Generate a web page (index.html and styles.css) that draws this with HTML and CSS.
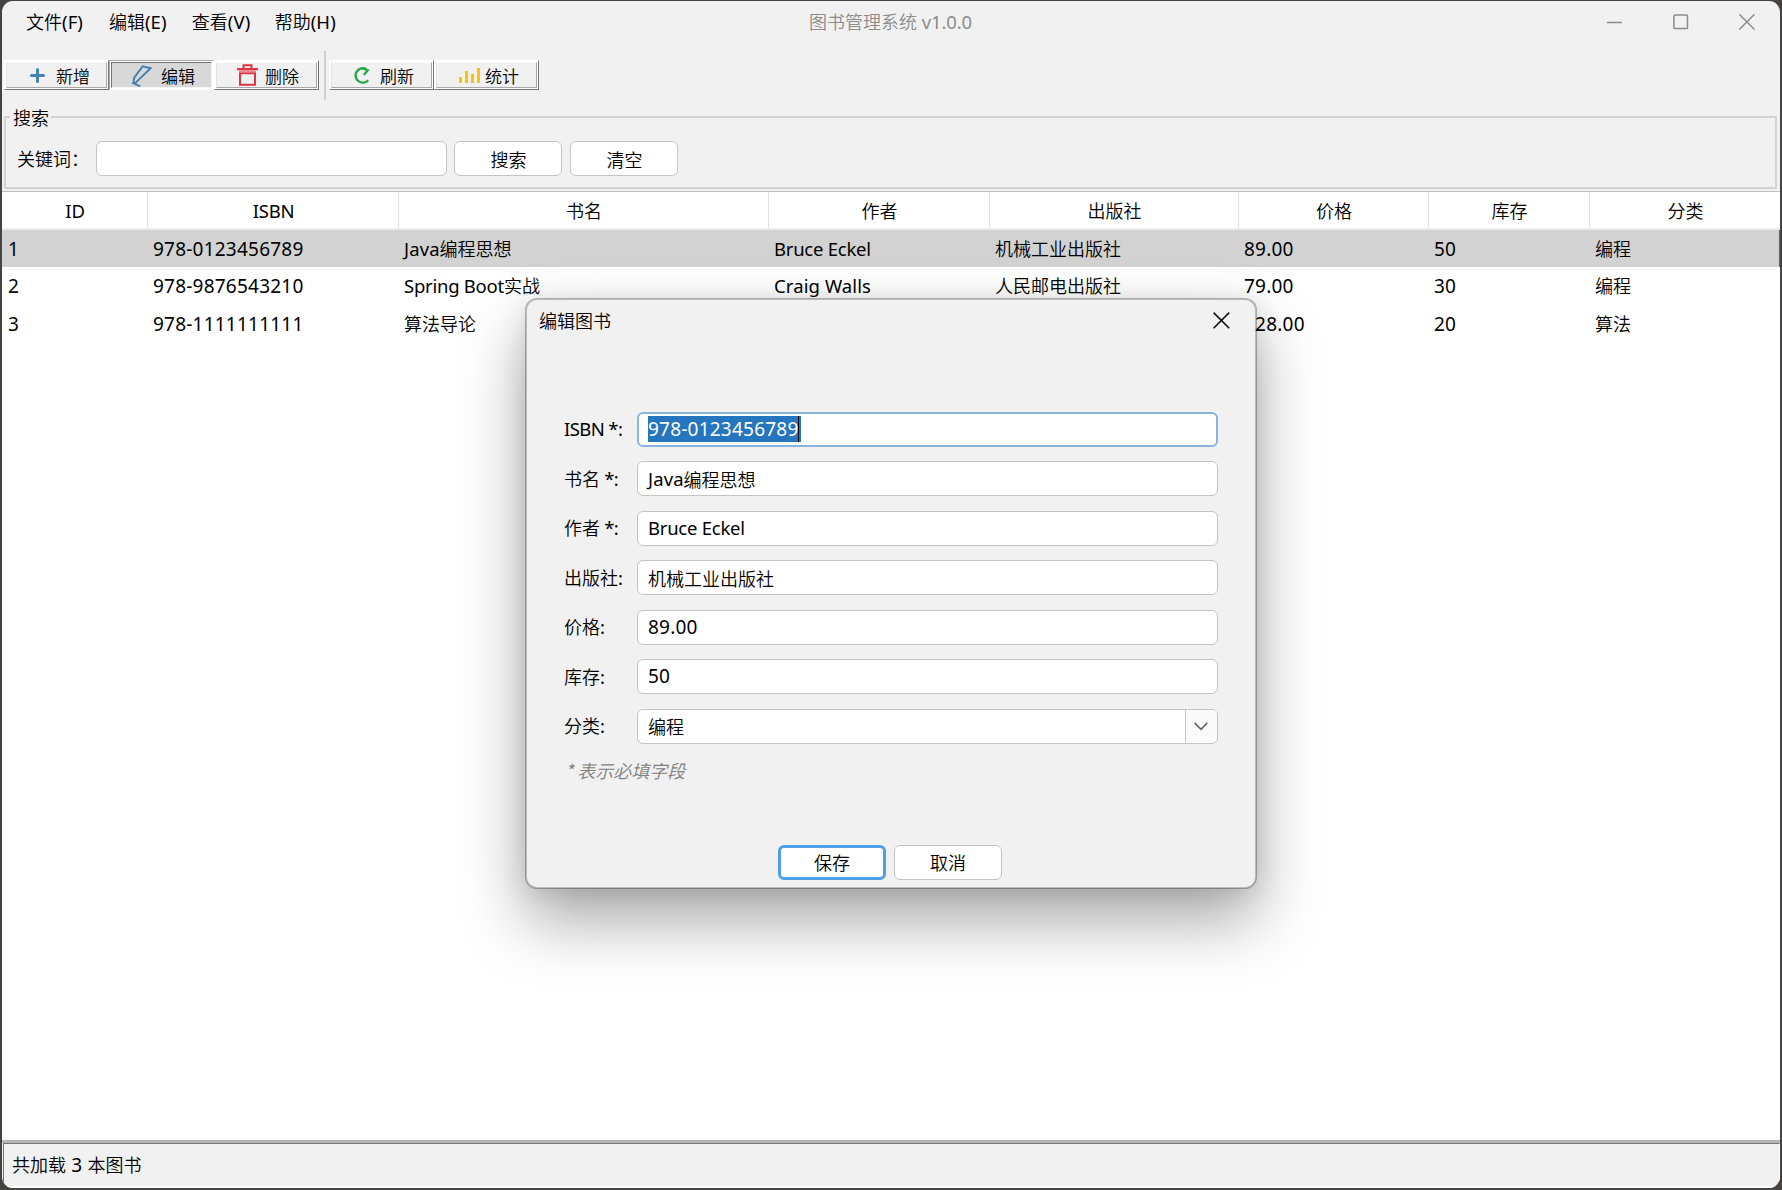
FILE: index.html
```html
<!DOCTYPE html>
<html lang="zh-CN">
<head>
<meta charset="utf-8">
<title>图书管理系统 v1.0.0</title>
<link rel="stylesheet" href="styles.css">
</head>
<body>
<div class="window">
  <header class="titlebar">
    <nav class="menu">
      <span>文件<i class="lat">(F)</i></span>
      <span>编辑<i class="lat">(E)</i></span>
      <span>查看<i class="lat">(V)</i></span>
      <span>帮助<i class="lat">(H)</i></span>
    </nav>
    <h1 class="title">图书管理系统<i class="lat"> v1.0.0</i></h1>
    <div class="controls">
      <svg width="16" height="16" viewBox="0 0 16 16"><path d="M0 8.5H15"/></svg>
      <svg width="16" height="16" viewBox="0 0 16 16"><rect x=".9" y="1" width="13.6" height="13.6" rx="1.2"/></svg>
      <svg width="16" height="16" viewBox="0 0 16 16"><path d="M.3.3 15.5 15.5M15.5.3.3 15.5"/></svg>
    </div>
  </header>

  <div class="toolbar">
    <button class="tool"><span class="face"><svg class="plus" width="15" height="15" viewBox="0 0 15 15"><path d="M7.5 1.5v12M1.5 7.5h12" stroke="#4682b4" stroke-width="3" stroke-linecap="round"/></svg>新增</span></button>
    <button class="tool pressed"><span class="face"><svg class="pen" width="20" height="22" viewBox="0 0 20 22" fill="none" stroke="#4682b4" stroke-width="2"><path d="M1.4 18.2 2.2 12.6 10.6 1.3 18.6 3.2 3.6 17.6 1.4 18.2 8.3 21.3"/></svg>编辑</span></button>
    <button class="tool"><span class="face"><svg class="trash" width="21" height="22" viewBox="0 0 21 22" fill="none" stroke="#dc3545" stroke-width="2"><path d="M3 9.2h15v11.6H3zM6.5 4V1.2h8V4"/><path d="M0 5.2h21" stroke-width="2.2"/><path d="M2 7.2h17" stroke="#e9868f" stroke-width="2"/></svg>删除</span></button>
    <span class="divider"></span>
    <button class="tool"><span class="face"><svg class="reload" width="17" height="18" viewBox="0 0 17 18" fill="none" stroke="#28a745" stroke-width="2.4"><path d="M15.2 14.2A7.2 7.2 0 1 1 13.4 3.2"/><path d="M8.8 2.2 14.8 4.2 10.8 9" stroke-width="2.2"/></svg>刷新</span></button>
    <button class="tool"><span class="face"><svg class="bars" width="21" height="15" viewBox="0 0 21 15" fill="#ffc107"><path d="M0 9h3v6H0zM6 3h3v12H6zM12 6h3v9h-3zM18 0h3v15h-3z"/></svg>统计</span></button>
  </div>

  <fieldset class="search">
    <legend>搜索</legend>
    <label>关键词：</label>
    <div class="field keyword"></div>
    <button class="btn">搜索</button>
    <button class="btn">清空</button>
  </fieldset>

  <main class="table">
    <div class="row head"><span><i class="lat">ID</i></span><span><i class="lat">ISBN</i></span><span>书名</span><span>作者</span><span>出版社</span><span>价格</span><span>库存</span><span>分类</span></div>
    <div class="row selected"><span><i class="num">1</i></span><span><i class="num">978-0123456789</i></span><span><i class="lat wide">Java</i>编程思想</span><span><i class="lat">Bruce Eckel</i></span><span>机械工业出版社</span><span><i class="num">89.00</i></span><span><i class="num">50</i></span><span>编程</span></div>
    <div class="row"><span><i class="num">2</i></span><span><i class="num">978-9876543210</i></span><span><i class="lat">Spring Boot</i>实战</span><span><i class="lat wide">Craig Walls</i></span><span>人民邮电出版社</span><span><i class="num">79.00</i></span><span><i class="num">30</i></span><span>编程</span></div>
    <div class="row"><span><i class="num">3</i></span><span><i class="num">978-1111111111</i></span><span>算法导论</span><span></span><span></span><span><i class="num">128.00</i></span><span><i class="num">20</i></span><span>算法</span></div>
  </main>

  <footer class="status"><div class="status-text">共加载<i class="num"> 3 </i>本图书</div></footer>
</div>

<section class="dialog">
  <header class="dialog-title">
    <span>编辑图书</span>
    <svg width="17" height="17" viewBox="0 0 17 17"><path d="M.6.6 16.2 16.2M16.2.6.6 16.2"/></svg>
  </header>
  <div class="form">
    <label><i class="lat">ISBN *:</i></label><div class="field focus"><span class="selection"><i class="num">978-0123456789</i></span></div>
    <label>书名<i class="lat"> *:</i></label><div class="field"><i class="lat wide">Java</i>编程思想</div>
    <label>作者<i class="lat"> *:</i></label><div class="field"><i class="lat">Bruce Eckel</i></div>
    <label>出版社<i class="lat">:</i></label><div class="field">机械工业出版社</div>
    <label>价格<i class="lat">:</i></label><div class="field"><i class="num">89.00</i></div>
    <label>库存<i class="lat">:</i></label><div class="field"><i class="num">50</i></div>
    <label>分类<i class="lat">:</i></label><div class="field combo"><span>编程</span><span class="arrow"><svg width="14" height="9" viewBox="0 0 14 9"><path d="M.7.9 7 7.4 13.3.9"/></svg></span></div>
  </div>
  <p class="note">* 表示必填字段</p>
  <div class="actions">
    <button class="btn primary">保存</button>
    <button class="btn">取消</button>
  </div>
</section>
</body>
</html>
```
FILE: styles.css
```css
* { box-sizing: border-box; }

body {
  margin: 0;
  width: 1782px;
  height: 1190px;
  padding: 1px 2px 2px;
  overflow: hidden;
  position: relative;
  background: #444342;
  color: #000;
  font: 350 18px/24px "Noto Sans CJK SC", sans-serif;
}

i { font-style: normal; font-weight: 380; font-family: "Noto Sans", sans-serif; white-space: pre; line-height: 1; }
.lat { font-size: 18.5px; letter-spacing: -0.25px; }
.num { font-size: 19px; letter-spacing: 0.22px; }
.wide { letter-spacing: 0.1px; }

.window {
  height: 1187px;
  display: flex;
  flex-direction: column;
  background: #f1f1f1;
  border-radius: 11px;
  overflow: hidden;
}

/* title bar */
.titlebar {
  height: 43px;
  display: grid;
  grid-template-columns: 1fr auto 1fr;
  align-items: center;
  padding-bottom: 3px;
}
.menu { display: flex; padding-left: 24px; }
.menu span { width: 82.9px; }
.menu .lat { letter-spacing: 0.1px; }
.title { margin: 0 1px 0 0; font-size: 18px; font-weight: 350; color: #8c8c8c; }
.title .lat { letter-spacing: -0.15px; }
.controls { display: flex; justify-content: flex-end; gap: 50px; padding-right: 25px; }
.controls svg { margin-top: 1px; fill: none; stroke: #8c8c8c; stroke-width: 1.5; }

/* toolbar */
.toolbar {
  height: 65px;
  display: flex;
  align-items: center;
  padding: 0 2px 3px;
}
.tool {
  width: 105px;
  height: 30px;
  padding: 1px;
  border: 1px solid;
  border-color: #fff #757575 #757575 #fff;
  background: #fff;
  font: 350 17px/24px "Noto Sans CJK SC", sans-serif;
  color: #000;
}
.face {
  height: 26px;
  display: flex;
  align-items: center;
  padding-top: 2px;
  border: 1px solid;
  border-color: #fff #a8a8a8 #a8a8a8 #e3e3e3;
  background: #f1f1f1;
}
.face svg { flex: none; }
.pressed { border-color: #a8a8a8 #fff #fff #a8a8a8; }
.pressed .face { background: #d8d8d8; border-color: #757575 #f4f4f4 #f4f4f4 #757575; }
.plus { margin: -2px 11px 0 23px; fill: none; }
.pen { margin: -1px 9px 0 20px; }
.trash { margin: -3px 7px 0 20px; }
.reload { margin: -2px 10px 0 21px; }
.bars { margin: -1px 5px 0 22px; }
.divider {
  width: 2px;
  height: 49px;
  margin: 0 3px 0 5px;
  background: #cfcfcf;
}

/* search group */
.search {
  height: 82px;
  margin: -2px 3px 2px 2px;
  padding: 14px 0 0 11px;
  border: 2px solid #d3d3d3;
  display: flex;
  align-items: flex-start;
}
.search legend { margin-left: -7px; padding: 0 2px 0 3px; height: 20px; line-height: 20px; }
.search label { width: 79.4px; line-height: 35px; }
.field {
  height: 35px;
  display: flex;
  align-items: center;
  padding: 0 9px 0 10px;
  background: #fff;
  border: 1.5px solid #c4c4c4;
  border-radius: 6px;
}
.keyword { width: 351px; margin-right: 7px; }
.btn {
  width: 108px;
  height: 35px;
  margin-right: 8px;
  padding: 0;
  background: #fff;
  border: 1.5px solid #c4c4c4;
  border-radius: 6px;
  font: 350 18px/24px "Noto Sans CJK SC", sans-serif;
  color: #000;
}

/* books table */
.table { flex: 1; background: #fff; border-top: 1px solid #c0c0c0; }
.row {
  height: 37.4px;
  display: grid;
  grid-template-columns: 146px 251px 370px 221px 249px 190px 161px 190px;
  align-items: center;
}
.row span { padding: 0 0 1px 5px; white-space: nowrap; }
.row span:first-child { padding-left: 6px; }
.head { height: 38px; border-bottom: 2px solid #ebebeb; }
.row.head span {
  height: 36px;
  line-height: 37px;
  padding: 0 0 0 1px;
  text-align: center;
  border-right: 1px solid #e2e2e2;
}
.row.head span:last-child { border-right: 0; }
.selected { height: 37px; border-right: 1px solid #2675bf; background: #d2d2d2; }

/* status bar */
.status {
  height: 48px;
  border-top: 3px solid #b5b5b5;
  padding-left: 1px;
}
.status-text {
  height: 45px;
  padding: 8px 0 0 8px;
  border: 1px solid;
  border-color: #757575 #fff #fff #757575;
  border-bottom-width: 2px;
}

/* edit dialog */
.dialog {
  position: absolute;
  left: 525px;
  top: 298px;
  width: 732px;
  height: 591px;
  display: flex;
  flex-direction: column;
  background: #f1f1f1;
  background-clip: padding-box;
  border: 2px solid rgba(0, 0, 0, 0.27);
  border-radius: 12px;
  box-shadow: 0 32px 64px rgba(0, 0, 0, 0.34), 0 2px 24px rgba(0, 0, 0, 0.1);
}
.dialog-title {
  height: 112px;
  display: flex;
  justify-content: space-between;
  align-items: flex-start;
  padding: 8px 25px 0 12px;
}
.dialog-title svg { margin-top: 4px; fill: none; stroke: #111; stroke-width: 1.6; }
.form {
  display: grid;
  grid-template-columns: 73px 581px;
  grid-auto-rows: 34.5px;
  row-gap: 15px;
  align-items: center;
  padding-left: 37px;
}
.form label { white-space: nowrap; padding-bottom: 2px; }
.form label .lat { letter-spacing: -0.6px; }
.focus { border: 2px solid #8ab4de; padding: 0 9px; }
.selection {
  height: 26px;
  width: 153px;
  display: flex;
  align-items: center;
  color: #fff;
  background: linear-gradient(#000, #000) 150px 0 / 1px 26px no-repeat #2675bf;
}
.combo { justify-content: space-between; padding-right: 0; }
.arrow {
  width: 32px;
  height: 32px;
  display: flex;
  align-items: center;
  justify-content: center;
  padding-right: 2px;
  border-left: 1px solid #c4c4c4;
  border-radius: 0 5px 5px 0;
  background: #fafafa;
}
.arrow svg { fill: none; stroke: #666; stroke-width: 1.6; }
.note { margin: 14px 0 0 38px; font-style: italic; color: #808080; }
.actions { display: flex; padding-left: 251px; margin-top: 63px; }
.primary { border: 3px solid #4f9fe6; }
```
